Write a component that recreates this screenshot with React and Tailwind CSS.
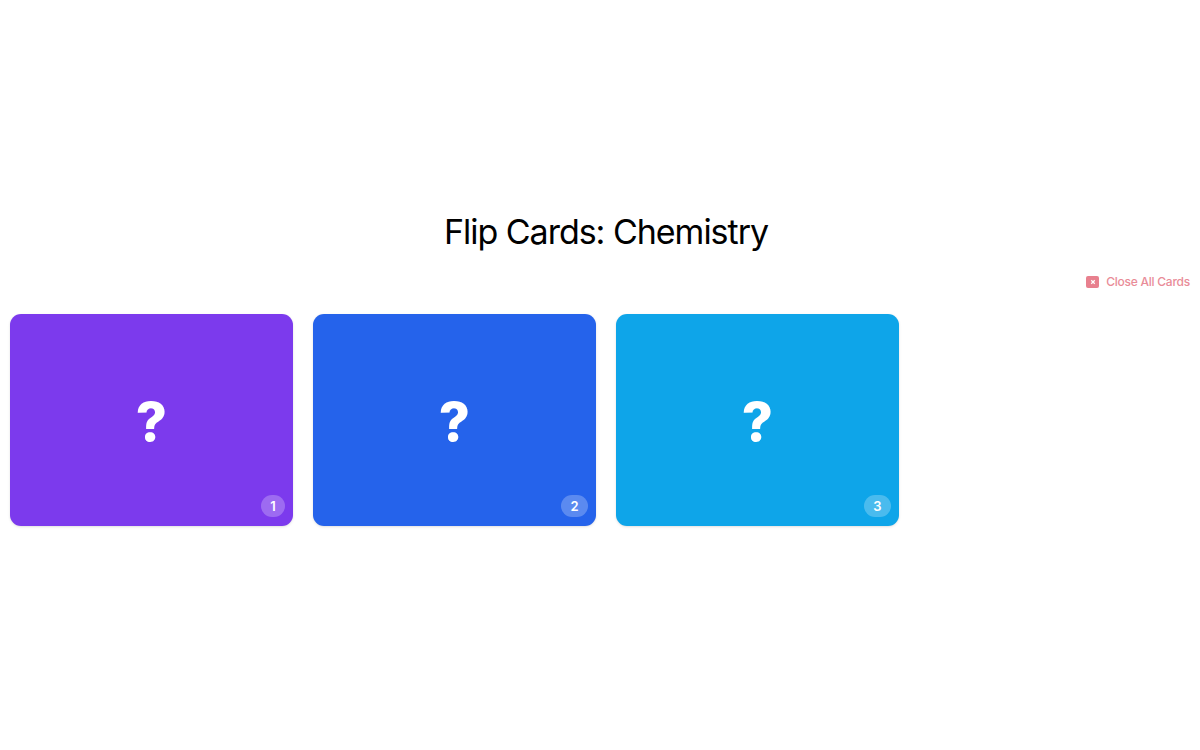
import React from "react";

const cards = [
    { id: 1, bg: "bg-[#7c3aed]", badge: "w-6" },
    { id: 2, bg: "bg-[#2563eb]", badge: "w-[27px]" },
    { id: 3, bg: "bg-[#0ea5e9]", badge: "w-[27px]" },
];

const FlipCard = ({ id, bg, badge }) => (
    <div className={`relative flex h-[212px] w-[283px] items-center justify-center rounded-[11px] shadow-sm ${bg}`}>
        <span className="pt-[3px] font-['Inter',sans-serif] text-[54px] leading-none font-extrabold text-white">?</span>
        <span className={`absolute right-[8px] bottom-[9px] flex h-[22px] items-center justify-center rounded-full bg-white/25 pt-[1px] text-[13px] font-semibold text-white ${badge}`}>
            {id}
        </span>
    </div>
);

export default function App() {
    return (
        <div className="min-h-[750px] bg-white pt-[209px] font-['Inter',sans-serif]">
            {/* Title */}
            <h1 className="pl-3 text-center text-[34px] leading-[46px] font-normal tracking-[-0.03em] text-black">
                Flip Cards: Chemistry
            </h1>

            {/* Close all */}
            <div className="mt-[16px] flex justify-end pr-[10px]">
                <button className="flex h-[20px] items-center gap-[7px] pt-[2px] text-[12px] font-medium tracking-[-0.02em] text-[#e98c98]">
                    <span className="flex h-[12px] w-[13px] items-center justify-center rounded-[2px] bg-[#e8808e]">
                        <svg className="h-[6px] w-[6px] text-white" fill="none" stroke="currentColor" strokeWidth={5} viewBox="0 0 24 24">
                            <path d="M5 5l14 14M19 5L5 19" />
                        </svg>
                    </span>
                    Close All Cards
                </button>
            </div>

            {/* Cards */}
            <div className="mt-[23px] flex gap-[20px] px-[10px]">
                {cards.map((card) => (
                    <FlipCard key={card.id} {...card} />
                ))}
            </div>
        </div>
    );
}
